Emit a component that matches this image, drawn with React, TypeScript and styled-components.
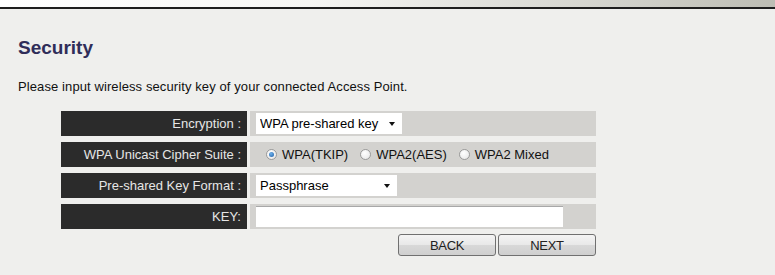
import React, { useState } from "react";
import styled, { createGlobalStyle } from "styled-components";

const GlobalStyle = createGlobalStyle`
  html, body {
    margin: 0;
    padding: 0;
    background: #efefed;
  }
  body {
    font-family: "Liberation Sans", Arial, sans-serif;
    width: 775px;
    height: 275px;
    overflow: hidden;
  }
`;

const TopBar = styled.div`
  height: 7px;
  background: linear-gradient(to right, #ffffff 0%, #f6f6f4 40%, #d6d6d0 75%, #bdbdb4 100%);
  border-bottom: 2px solid #1e1e1e;
`;

const Content = styled.div`
  padding: 28px 0 0 18px;
`;

const Title = styled.h2`
  margin: 0;
  font-size: 19px;
  line-height: 22px;
  font-weight: bold;
  color: #2f2d59;
`;

const Intro = styled.p`
  margin: 20px 0 0;
  font-size: 13px;
  line-height: 16px;
  letter-spacing: 0.1px;
  color: #111;
`;

const Form = styled.div`
  margin: 16px 0 0 61px;
  width: 535px;
  display: grid;
  grid-template-columns: 186px 346px;
  column-gap: 3px;
  row-gap: 6px;
`;

const Label = styled.div`
  height: 25px;
  background: #2b2b2b;
  color: #e6e6e6;
  font-size: 13px;
  display: flex;
  align-items: center;
  justify-content: flex-end;
  padding-right: 6px;
`;

const Cell = styled.div`
  height: 25px;
  background: #d3d2cf;
  display: flex;
  align-items: center;
  padding-left: 6px;
`;

const SelectWrap = styled.div<{ $width: number }>`
  position: relative;
  width: ${(p) => p.$width}px;
  height: 21px;
`;

const Select = styled.select`
  appearance: none;
  width: 100%;
  height: 100%;
  border: none;
  background: #fff;
  font-family: "Liberation Sans", Arial, sans-serif;
  font-size: 13px;
  color: #000;
  padding: 0 0 0 4px;
  outline: none;
`;

const Arrow = styled.span`
  position: absolute;
  right: 7px;
  top: 9px;
  width: 0;
  height: 0;
  border-left: 3.5px solid transparent;
  border-right: 3.5px solid transparent;
  border-top: 4px solid #111;
  pointer-events: none;
`;

const RadioGroup = styled.div`
  display: flex;
  align-items: center;
  gap: 12px;
  padding-left: 10px;
  font-size: 13px;
  color: #111;
`;

const RadioLabel = styled.label`
  display: flex;
  align-items: center;
  gap: 5px;
`;

const Radio = styled.input`
  appearance: none;
  margin: 0;
  width: 11px;
  height: 11px;
  border-radius: 50%;
  border: 1px solid #9a9a9a;
  background: radial-gradient(circle at 40% 35%, #ffffff 0%, #e4e4e4 100%);
  position: relative;
  &:checked::after {
    content: "";
    position: absolute;
    left: 2px;
    top: 2px;
    width: 5px;
    height: 5px;
    border-radius: 50%;
    background: radial-gradient(circle at 40% 35%, #6fb0ea 0%, #1d5fa8 100%);
  }
`;

const TextInput = styled.input`
  width: 307px;
  height: 21px;
  box-sizing: border-box;
  border: none;
  border-top: 1px solid #a8a8a8;
  background: #fff;
  outline: none;
  font-size: 13px;
`;

const Buttons = styled.div`
  width: 535px;
  margin: 5px 0 0 61px;
  display: flex;
  justify-content: flex-end;
  gap: 2px;
`;

const Button = styled.button`
  width: 98px;
  height: 22px;
  border: 1px solid #707070;
  border-radius: 3px;
  background: linear-gradient(to bottom, #f4f4f4 0%, #e8e8e8 50%, #d8d8d8 51%, #cfcfcf 100%);
  font-family: "Liberation Sans", Arial, sans-serif;
  font-size: 13px;
  color: #222;
  padding: 0;
  letter-spacing: -0.3px;
`;

export default function App() {
  const [cipher, setCipher] = useState("tkip");
  const [encryption, setEncryption] = useState("wpa");
  const [format, setFormat] = useState("passphrase");
  const [key, setKey] = useState("");

  return (
    <>
      <GlobalStyle />
      <TopBar />
      <Content>
        <Title>Security</Title>
        <Intro>Please input wireless security key of your connected Access Point.</Intro>
      </Content>
      <Form>
        <Label>Encryption :</Label>
        <Cell>
          <SelectWrap $width={146}>
            <Select value={encryption} onChange={(e) => setEncryption(e.target.value)}>
              <option value="wpa">WPA pre-shared key</option>
              <option value="wep">WEP</option>
              <option value="none">Disable</option>
            </Select>
            <Arrow />
          </SelectWrap>
        </Cell>

        <Label>WPA Unicast Cipher Suite :</Label>
        <Cell>
          <RadioGroup>
            {[
              ["tkip", "WPA(TKIP)"],
              ["aes", "WPA2(AES)"],
              ["mixed", "WPA2 Mixed"],
            ].map(([value, text]) => (
              <RadioLabel key={value}>
                <Radio
                  type="radio"
                  name="cipher"
                  checked={cipher === value}
                  onChange={() => setCipher(value)}
                />
                {text}
              </RadioLabel>
            ))}
          </RadioGroup>
        </Cell>

        <Label>Pre-shared Key Format :</Label>
        <Cell>
          <SelectWrap $width={141}>
            <Select value={format} onChange={(e) => setFormat(e.target.value)}>
              <option value="passphrase">Passphrase</option>
              <option value="hex">Hex (64 characters)</option>
            </Select>
            <Arrow />
          </SelectWrap>
        </Cell>

        <Label>KEY:</Label>
        <Cell>
          <TextInput value={key} onChange={(e) => setKey(e.target.value)} />
        </Cell>
      </Form>
      <Buttons>
        <Button>BACK</Button>
        <Button>NEXT</Button>
      </Buttons>
    </>
  );
}
